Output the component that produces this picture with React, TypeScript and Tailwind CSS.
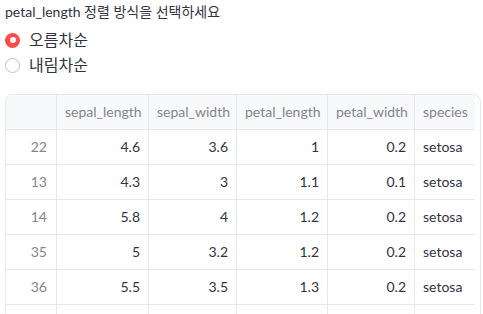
import { useState } from "react";

const columns = ["sepal_length", "sepal_width", "petal_length", "petal_width", "species"];

const rows = [
  ["22", "4.6", "3.6", "1", "0.2", "setosa"],
  ["13", "4.3", "3", "1.1", "0.1", "setosa"],
  ["14", "5.8", "4", "1.2", "0.2", "setosa"],
  ["35", "5", "3.2", "1.2", "0.2", "setosa"],
  ["36", "5.5", "3.5", "1.3", "0.2", "setosa"],
];

const options = ["오름차순", "내림차순"];

export default function App() {
  const [order, setOrder] = useState(options[0]);

  return (
    <div
      className="min-h-screen bg-white px-[5px] text-[#31333f]"
      style={{ fontFamily: "Lato, 'Noto Sans CJK KR', sans-serif" }}
    >
      <p className="h-6 text-sm leading-6">petal_length 정렬 방식을 선택하세요</p>

      <div className="mt-1 flex flex-col gap-px">
        {options.map((opt) => {
          const active = order === opt;
          return (
            <label
              key={opt}
              onClick={() => setOrder(opt)}
              className="flex h-6 cursor-pointer items-center gap-[9px]"
            >
              {active ? (
                <span className="flex h-[15px] w-[15px] items-center justify-center rounded-full bg-[#ff4b4b]">
                  <span className="h-[6px] w-[6px] rounded-full bg-white" />
                </span>
              ) : (
                <span className="h-[15px] w-[15px] rounded-full border border-[#bfc0c4] bg-white" />
              )}
              <span className="text-base leading-6">{opt}</span>
            </label>
          );
        })}
      </div>

      <div className="mt-[17px] w-[476px] overflow-hidden rounded-t-lg border border-b-0 border-[#e6e8eb]">
        <div className="grid w-[469px] grid-cols-[51px_92px_88px_91px_87px_60px] text-sm">
          <div className="h-[35px] border-b border-r border-[#e6e8eb] bg-[#f8f9fb]" />
          {columns.map((col, i) => (
            <div
              key={col}
              className={`flex h-[35px] items-center border-b border-[#e6e8eb] bg-[#f8f9fb] px-2 text-[#83858c] ${
                i < columns.length - 1 ? "border-r" : ""
              }`}
            >
              {col}
            </div>
          ))}

          {rows.map((row) =>
            row.map((cell, i) => (
              <div
                key={row[0] + "-" + i}
                className={`flex h-[35px] items-center border-b border-[#e6e8eb] px-2 ${
                  i < row.length - 1 ? "border-r" : ""
                } ${i === 0 ? "justify-end pr-[9px] text-[#83858c]" : ""} ${
                  i > 0 && i < 5 ? "justify-end" : ""
                }`}
              >
                {cell}
              </div>
            ))
          )}

          {/* next row, scrolled below the fold */}
          {[0, 1, 2, 3, 4, 5].map((i) => (
            <div
              key={"tail-" + i}
              className={`h-[10px] border-[#e6e8eb] ${i < 5 ? "border-r" : ""}`}
            />
          ))}
        </div>
      </div>
    </div>
  );
}
